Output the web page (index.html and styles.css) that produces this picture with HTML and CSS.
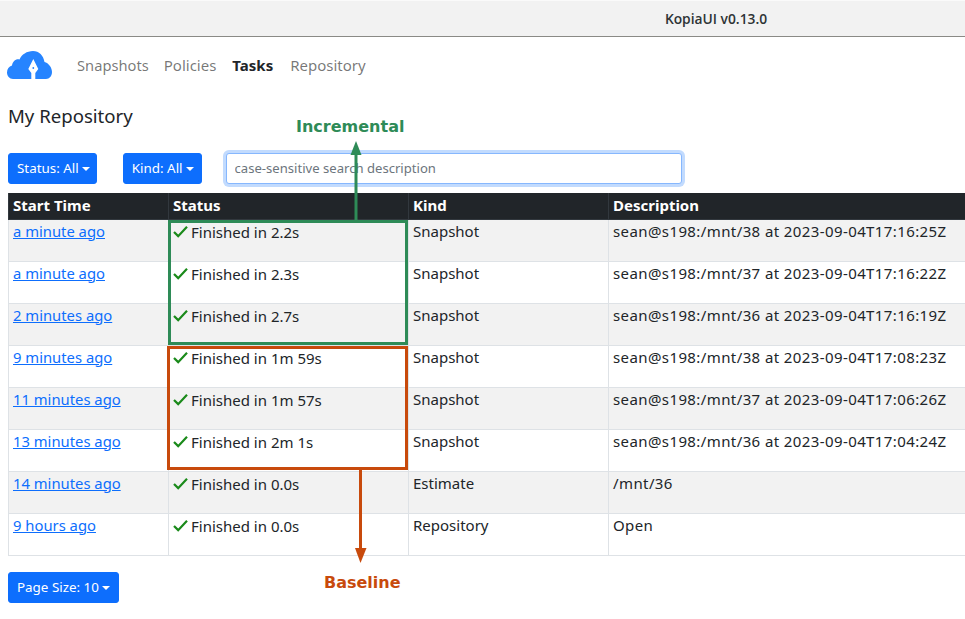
FILE: index.html
```html
<!DOCTYPE html>
<html lang="en">
<head>
    <meta charset="UTF-8">
    <title>KopiaUI v0.13.0</title>
    <link rel="stylesheet" href="styles.css">
</head>
<body>
    <div class="titlebar">KopiaUI v0.13.0</div>
    <nav class="navbar">
        <svg class="logo" viewBox="0 0 45 28" width="45" height="28">
            <path fill="#2684ff" d="M6 28 C2.500 28 0 25 0 21.500 C0 18 2 15.500 5 14.500 C5.500 10.500 9 7.500 12.500 8.500 C14.500 3.500 20 0 26 0 C32 0 36.500 4.500 37.500 11 C41.500 12 45 16.500 45 21 C45 25 42.500 28 39 28 Z"/>
            <path fill="#fff" d="M26.300 8 L21.300 18 L24.300 22 V28 H28.300 V22 L31.300 18 Z"/>
            <circle cx="26.300" cy="17" r="0.900" fill="#2684ff"/>
        </svg>
        <a class="nav-link" href="#">Snapshots</a>
        <a class="nav-link" href="#">Policies</a>
        <a class="nav-link active" href="#">Tasks</a>
        <a class="nav-link" href="#">Repository</a>
    </nav>
    <h1 class="repo-name">My Repository</h1>
    <div class="filters">
        <button class="btn btn-status">Status: All<span class="caret"></span></button>
        <button class="btn btn-kind">Kind: All<span class="caret"></span></button>
        <input class="search" type="text" placeholder="case-sensitive search description">
    </div>
    <table class="tasks">
        <thead>
            <tr><th>Start Time</th><th>Status</th><th>Kind</th><th>Description</th></tr>
        </thead>
        <tbody>
            <tr><td><a href="#">a minute ago</a></td><td class="status"><svg class="check" viewBox="0 0 16 14"><path d="M1 7.500 L5.500 12 L15 2"/></svg>Finished in 2.2s</td><td>Snapshot</td><td class="desc">sean@s198:/mnt/38 at 2023-09-04T17:16:25Z</td></tr>
            <tr><td><a href="#">a minute ago</a></td><td class="status"><svg class="check" viewBox="0 0 16 14"><path d="M1 7.500 L5.500 12 L15 2"/></svg>Finished in 2.3s</td><td>Snapshot</td><td class="desc">sean@s198:/mnt/37 at 2023-09-04T17:16:22Z</td></tr>
            <tr><td><a href="#">2 minutes ago</a></td><td class="status"><svg class="check" viewBox="0 0 16 14"><path d="M1 7.500 L5.500 12 L15 2"/></svg>Finished in 2.7s</td><td>Snapshot</td><td class="desc">sean@s198:/mnt/36 at 2023-09-04T17:16:19Z</td></tr>
            <tr><td><a href="#">9 minutes ago</a></td><td class="status"><svg class="check" viewBox="0 0 16 14"><path d="M1 7.500 L5.500 12 L15 2"/></svg>Finished in 1m 59s</td><td>Snapshot</td><td class="desc">sean@s198:/mnt/38 at 2023-09-04T17:08:23Z</td></tr>
            <tr><td><a href="#">11 minutes ago</a></td><td class="status"><svg class="check" viewBox="0 0 16 14"><path d="M1 7.500 L5.500 12 L15 2"/></svg>Finished in 1m 57s</td><td>Snapshot</td><td class="desc">sean@s198:/mnt/37 at 2023-09-04T17:06:26Z</td></tr>
            <tr><td><a href="#">13 minutes ago</a></td><td class="status"><svg class="check" viewBox="0 0 16 14"><path d="M1 7.500 L5.500 12 L15 2"/></svg>Finished in 2m 1s</td><td>Snapshot</td><td class="desc">sean@s198:/mnt/36 at 2023-09-04T17:04:24Z</td></tr>
            <tr><td><a href="#">14 minutes ago</a></td><td class="status"><svg class="check" viewBox="0 0 16 14"><path d="M1 7.500 L5.500 12 L15 2"/></svg>Finished in 0.0s</td><td>Estimate</td><td class="desc">/mnt/36</td></tr>
            <tr><td><a href="#">9 hours ago</a></td><td class="status"><svg class="check" viewBox="0 0 16 14"><path d="M1 7.500 L5.500 12 L15 2"/></svg>Finished in 0.0s</td><td>Repository</td><td class="desc">Open</td></tr>
        </tbody>
    </table>
    <button class="btn btn-page">Page Size: 10<span class="caret"></span></button>

    <!-- annotations drawn over the screenshot -->
    <div class="box box-green"></div>
    <div class="box box-orange"></div>
    <svg class="arrows" width="965" height="619" viewBox="0 0 965 619">
        <path d="M356 220 V150" stroke="#2e8b57" stroke-width="3" fill="none"/>
        <path d="M356 141 L350.500 155 H361.500 Z" fill="#2e8b57"/>
        <path d="M360.500 468 V552" stroke="#c84a0c" stroke-width="3" fill="none"/>
        <path d="M360.500 563 L355 548 H366.500 Z" fill="#c84a0c"/>
    </svg>
    <div class="label label-green">Incremental</div>
    <div class="label label-orange">Baseline</div>
</body>
</html>
```

FILE: styles.css
```css
html, body {
    margin: 0;
    padding: 0;
    height: 619px;
    overflow: hidden;
}
body {
    font-family: "Noto Sans", sans-serif;
    font-size: 15px;
    color: #212529;
    background: #fff;
    position: relative;
}
.titlebar {
    height: 35px;
    line-height: 35px;
    background: #f2f2f2;
    border-top: 1px solid #fafafa;
    border-bottom: 1px solid #8a8a86;
    font-family: "Open Sans", sans-serif;
    font-size: 13.800px;
    font-weight: 600;
    text-align: center;
    color: #2e3436;
    padding-left: 467px;
    width: 498px;
}
.navbar {
    display: flex;
    align-items: center;
    height: 56px;
    padding-left: 7px;
}
.logo {
    margin-right: 25px;
}
.nav-link {
    color: rgba(0, 0, 0, 0.55);
    text-decoration: none;
    font-size: 15px;
    margin-right: 16px;
}
.nav-link:first-of-type {
    font-size: 14.700px;
    margin-right: 15px;
}
.nav-link.active {
    color: #212529;
    font-weight: 700;
    margin-right: 17px;
}
.repo-name {
    font-size: 18.600px;
    font-weight: 400;
    line-height: 26px;
    margin: 10px 0 0 8px;
}
.filters {
    display: flex;
    align-items: center;
    margin: 23px 0 9px 8px;
    height: 32px;
}
.btn {
    background: #0d6efd;
    color: #fff;
    border: 1px solid #0d6efd;
    border-radius: 3px;
    font-family: inherit;
    font-size: 13.400px;
    height: 31px;
    padding: 0 6px 0 8px;
}
.btn-status {
    margin-right: 26px;
}
.btn-kind {
    margin-right: 24px;
    padding-right: 7px;
}
.caret {
    display: inline-block;
    margin-left: 3px;
    vertical-align: 2px;
    border-top: 4px solid #fff;
    border-left: 4px solid transparent;
    border-right: 4px solid transparent;
}
.search {
    width: 456px;
    height: 31px;
    box-sizing: border-box;
    padding: 0 8px;
    font-family: inherit;
    font-size: 13.100px;
    border: 1px solid #86b7fe;
    border-radius: 3px;
    box-shadow: 0 0 0 3px #c2dbfe;
    outline: none;
}
.search::placeholder {
    color: #6c757d;
}
.tasks {
    border-collapse: collapse;
    table-layout: fixed;
    width: 1000px;
    margin-left: 8px;
}
.tasks th:nth-child(1) { width: 160px; }
.tasks th:nth-child(2) { width: 240px; }
.tasks th:nth-child(3) { width: 200px; }
.tasks th:nth-child(4) { width: 400px; }
.tasks th {
    box-sizing: border-box;
    background: #212529;
    color: #fff;
    text-align: left;
    font-weight: 700;
    height: 26px;
    padding: 0 4px 2px;
    border: 1px solid #32383e;
    border-top: 0;
}
.tasks td {
    height: 42px;
    padding: 1px 4px 0;
    vertical-align: top;
    border: 1px solid #dee2e6;
    box-sizing: border-box;
    line-height: 21px;
}
.tasks td.status {
    padding-top: 2px;
}
.tasks tbody tr:nth-child(odd) td {
    background: #f2f2f2;
}
.tasks a {
    color: #0d6efd;
    font-size: 14.800px;
}
.tasks .desc {
    letter-spacing: 0.400px;
}
.check {
    width: 15px;
    height: 13px;
    margin-right: 3px;
    vertical-align: 0;
}
.check path {
    fill: none;
    stroke: #1a8a1a;
    stroke-width: 2.400;
}
.btn-page {
    display: block;
    margin: 16px 0 0 8px;
    padding-right: 8px;
}

/* annotations */
.box {
    position: absolute;
    box-sizing: border-box;
    border: 3px solid;
}
.box-green {
    left: 168px;
    top: 220px;
    width: 240px;
    height: 125px;
    border-color: #2e8b57;
}
.box-orange {
    left: 167px;
    top: 346px;
    width: 241px;
    height: 124px;
    border-color: #c84a0c;
}
.arrows {
    position: absolute;
    left: 0;
    top: 0;
}
.label {
    position: absolute;
    font-family: "DejaVu Sans", sans-serif;
    font-weight: 700;
    font-size: 16px;
}
.label-green {
    left: 296px;
    top: 117px;
    color: #2e8b57;
}
.label-orange {
    left: 324px;
    top: 573px;
    color: #c84a0c;
}
```
